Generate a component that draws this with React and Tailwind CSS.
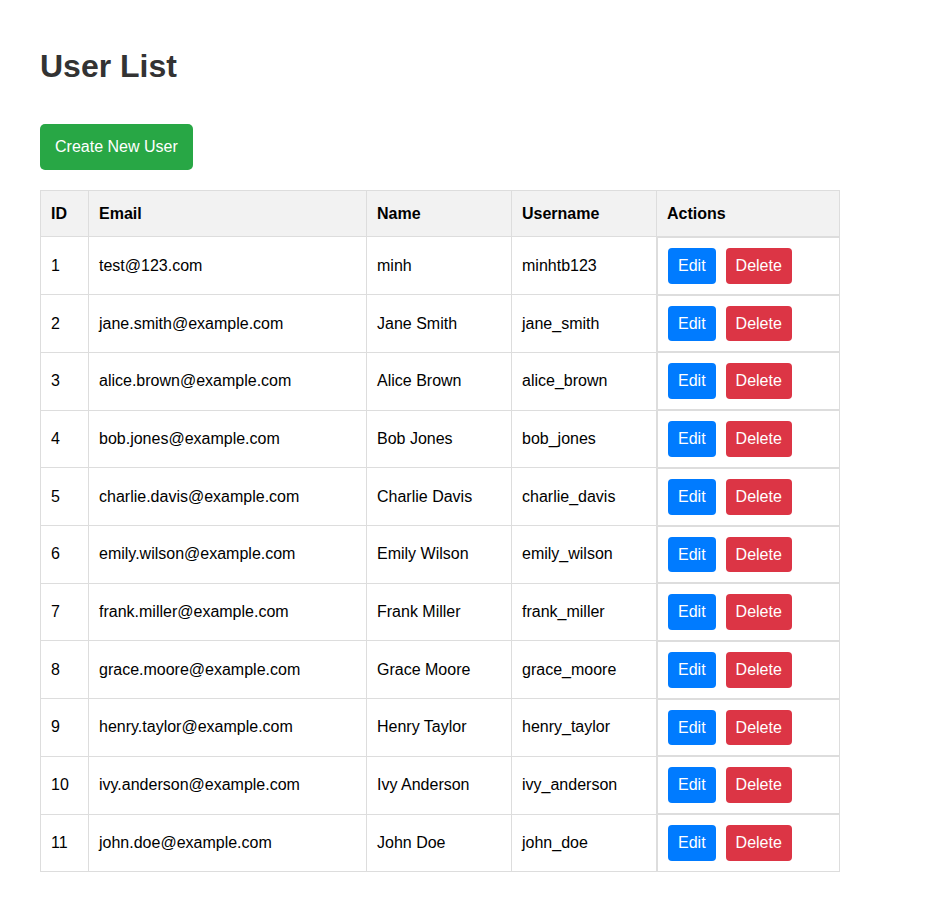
import React from "react";

const users = [
  [1, "test@123.com", "minh", "minhtb123"],
  [2, "jane.smith@example.com", "Jane Smith", "jane_smith"],
  [3, "alice.brown@example.com", "Alice Brown", "alice_brown"],
  [4, "bob.jones@example.com", "Bob Jones", "bob_jones"],
  [5, "charlie.davis@example.com", "Charlie Davis", "charlie_davis"],
  [6, "emily.wilson@example.com", "Emily Wilson", "emily_wilson"],
  [7, "frank.miller@example.com", "Frank Miller", "frank_miller"],
  [8, "grace.moore@example.com", "Grace Moore", "grace_moore"],
  [9, "henry.taylor@example.com", "Henry Taylor", "henry_taylor"],
  [10, "ivy.anderson@example.com", "Ivy Anderson", "ivy_anderson"],
  [11, "john.doe@example.com", "John Doe", "john_doe"],
];

export default function App() {
  return (
    <div
      className="min-h-[900px] bg-white px-10 pt-[48px] text-[16px] leading-6 text-black"
      style={{ fontFamily: '"Liberation Sans", Arial, sans-serif' }}
    >
      <h1 className="text-[32px] font-bold leading-[37px] text-[#333]">User List</h1>
      <button className="mt-[39px] rounded-[5px] bg-[#28a745] px-[15px] py-[11px] text-[16px] leading-6 text-white">
        Create New User
      </button>
      <table className="mt-[20px] border-collapse text-left">
        <thead>
          <tr className="bg-[#f2f2f2]">
            <th className="w-[48px] border border-[#ddd] p-[10px] font-bold leading-[25px]">ID</th>
            <th className="w-[278px] border border-[#ddd] p-[10px] font-bold leading-[25px]">Email</th>
            <th className="w-[145px] border border-[#ddd] p-[10px] font-bold leading-[25px]">Name</th>
            <th className="w-[145px] border border-[#ddd] p-[10px] font-bold leading-[25px]">Username</th>
            <th className="w-[183px] border border-[#ddd] p-[10px] font-bold leading-[25px]">Actions</th>
          </tr>
        </thead>
        <tbody>
          {users.map(([id, email, name, username]) => (
            <tr key={id}>
              <td className="border border-[#ddd] p-[10px]">{id}</td>
              <td className="border border-[#ddd] p-[10px]">{email}</td>
              <td className="border border-[#ddd] p-[10px]">{name}</td>
              <td className="border border-[#ddd] p-[10px]">{username}</td>
              <td className="flex gap-[10px] border border-[#ddd] p-[10px]">
                <button className="rounded-[4px] bg-[#007bff] px-[10px] py-[6px] leading-[23.7px] text-white">
                  Edit
                </button>
                <button className="rounded-[4px] bg-[#dc3545] px-[10px] py-[6px] leading-[23.7px] text-white">
                  Delete
                </button>
              </td>
            </tr>
          ))}
        </tbody>
      </table>
    </div>
  );
}
